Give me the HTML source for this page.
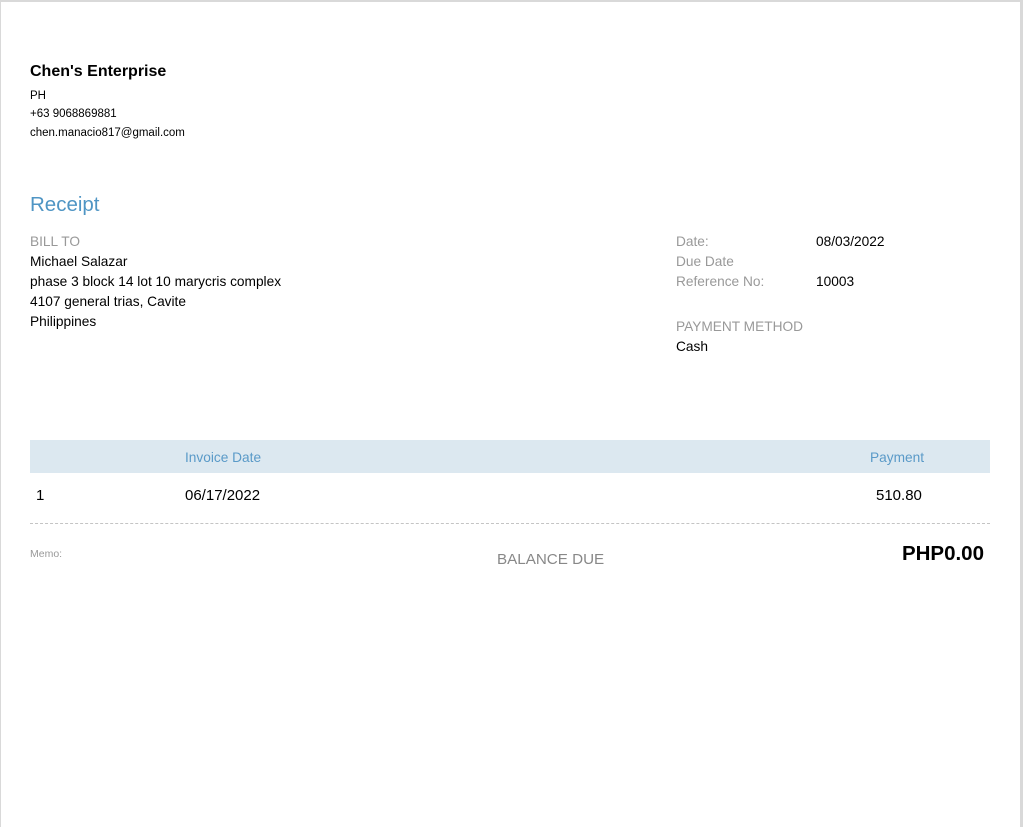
<!DOCTYPE html>
<html><head><style>
html,body{margin:0;padding:0;}
body{width:1023px;height:827px;background:#d9d9d9;font-family:"Liberation Sans",Arial,sans-serif;position:relative;overflow:hidden;}
.page{position:absolute;left:1px;top:2px;width:1019px;height:825px;background:#fff;}
.t{position:absolute;white-space:nowrap;line-height:1;}
.g{color:#999;}
</style></head><body>
<div class="page"></div>
<div class="t" style="left:30px;top:64px;font-size:16px;font-weight:bold;">Chen's Enterprise</div>
<div class="t" style="left:30px;top:91px;font-size:11.5px;">PH</div>
<div class="t" style="left:30px;top:109px;font-size:11.5px;">+63 9068869881</div>
<div class="t" style="left:30px;top:128px;font-size:11.5px;">chen.manacio817@gmail.com</div>
<div class="t" style="left:30px;top:195px;font-size:20.5px;color:#4f95c4;">Receipt</div>
<div class="t g" style="left:30px;top:235px;font-size:13.7px;">BILL TO</div>
<div class="t" style="left:30px;top:255px;font-size:13.7px;">Michael Salazar</div>
<div class="t" style="left:30px;top:275px;font-size:13.7px;">phase 3 block 14 lot 10 marycris complex</div>
<div class="t" style="left:30px;top:295px;font-size:13.7px;">4107 general trias, Cavite</div>
<div class="t" style="left:30px;top:315px;font-size:13.7px;">Philippines</div>
<div class="t g" style="left:676px;top:235px;font-size:13.7px;">Date:</div>
<div class="t" style="left:816px;top:235px;font-size:13.7px;">08/03/2022</div>
<div class="t g" style="left:676px;top:255px;font-size:13.7px;">Due Date</div>
<div class="t g" style="left:676px;top:275px;font-size:13.7px;">Reference No:</div>
<div class="t" style="left:816px;top:275px;font-size:13.7px;">10003</div>
<div class="t g" style="left:676px;top:320px;font-size:13.7px;">PAYMENT METHOD</div>
<div class="t" style="left:676px;top:340px;font-size:13.7px;">Cash</div>
<div style="position:absolute;left:30px;top:440px;width:960px;height:33px;background:#dce8f0;"></div>
<div class="t" style="left:185px;top:451px;font-size:13.7px;color:#5a9ac8;">Invoice Date</div>
<div class="t" style="left:870px;top:451px;font-size:13.7px;color:#5a9ac8;">Payment</div>
<div class="t" style="left:36px;top:488px;font-size:15px;">1</div>
<div class="t" style="left:185px;top:488px;font-size:15px;">06/17/2022</div>
<div class="t" style="left:876px;top:488px;font-size:15px;">510.80</div>
<div style="position:absolute;left:30px;top:523px;width:960px;border-top:1px dashed #c4c4c4;"></div>
<div class="t g" style="left:30px;top:549px;font-size:10.5px;">Memo:</div>
<div class="t" style="left:497px;top:552px;font-size:15.2px;color:#888;">BALANCE DUE</div>
<div class="t" style="right:39px;top:544px;font-size:20.5px;font-weight:bold;">PHP0.00</div>
</body></html>
